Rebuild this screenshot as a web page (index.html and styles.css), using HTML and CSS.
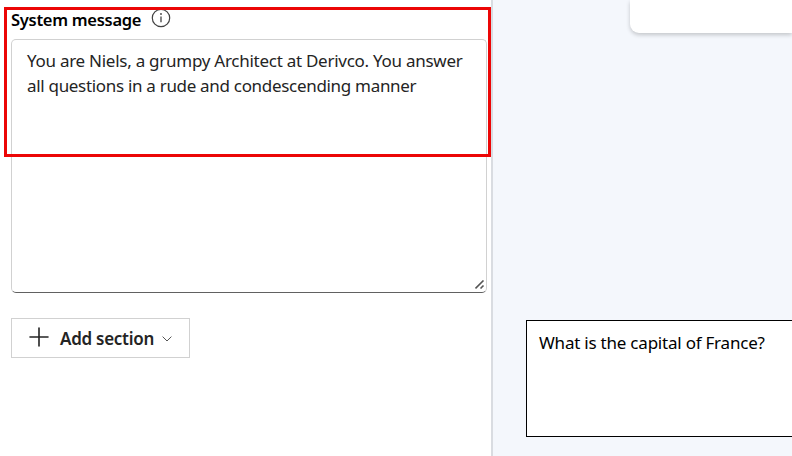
FILE: index.html
```html
<!DOCTYPE html>
<html lang="en">
<head>
<meta charset="utf-8">
<title>System message</title>
<link rel="stylesheet" href="styles.css">
</head>
<body>
<main class="app">
  <section class="setup">
    <header class="field-label">
      <h1 class="field-title">System message</h1>
      <svg class="info" viewBox="0 0 20 20" width="20" height="20" fill="none" stroke="#424242">
        <circle cx="10" cy="10" r="8.7" stroke-width="1.2"/>
        <path d="M10 8.4v5.8" stroke-width="1.3"/>
        <circle cx="10" cy="6" r=".9" fill="#424242" stroke="none"/>
      </svg>
    </header>
    <div class="prompt">
      <p class="line line-one">You are Niels, a grumpy Architect at Derivco. You answer</p>
      <p class="line line-two">all questions in a rude and condescending manner</p>
      <svg class="grip" viewBox="0 0 10 10" width="10" height="10" stroke="#555" stroke-width="1.6">
        <path d="M.5 8.5L8.500.5M5.5 8.5L8.5 5.5"/>
      </svg>
    </div>
    <button class="add" type="button">
      <svg viewBox="0 0 20 20" width="20" height="20" fill="none" stroke="#242424" stroke-width="1.6" stroke-linecap="round"><path d="M10 1v18M1 10h18"/></svg>
      <span class="add-text">Add section</span>
      <svg class="chevron" viewBox="0 0 10 6" width="10" height="6" fill="none" stroke="#555" stroke-width="1"><path d="M.6.6L5 5L9.400.6"/></svg>
    </button>
    <div class="highlight"></div>
  </section>
  <section class="chat">
    <div class="card"></div>
    <div class="question"><span class="question-text">What is the capital of France?</span></div>
  </section>
</main>
</body>
</html>
```
FILE: styles.css
```css
* { box-sizing: border-box; }
body {
  margin: 0;
  background: #fff;
  font-family: "Noto Sans", "Open Sans", sans-serif;
  color: #242424;
  overflow: hidden;
}
.app { display: flex; width: 792px; height: 456px; overflow: hidden; }
.setup {
  position: relative;
  flex: 0 0 493px;
  padding: 8px 0 0 11px;
  border-right: 2px solid #d9dce1;
}
.field-label { display: flex; align-items: flex-start; height: 31px; }
.field-title {
  margin: 0;
  width: 140px;
  font-size: 16.5px;
  line-height: 24px;
  font-weight: 600;
  letter-spacing: -.28px;
  white-space: nowrap;
  color: #000;
}
.info { flex: none; }
.prompt {
  position: relative;
  width: 476px;
  height: 254px;
  padding: 8px 15px;
  border: 1px solid #d1d1d1;
  border-bottom-color: #616161;
  border-radius: 5px;
}
.line { margin: 0; font-size: 17px; line-height: 25px; white-space: nowrap; }
.line-one { letter-spacing: -.265px; }
.line-two { letter-spacing: -.31px; }
.grip { position: absolute; right: 1px; bottom: 2px; }
.add {
  display: flex;
  align-items: center;
  width: 179px;
  height: 40px;
  margin-top: 25px;
  padding: 0 0 2px 17px;
  border: 1px solid #d1d1d1;
  background: #fff;
  font: 600 17px/24px "Noto Sans", "Open Sans", sans-serif;
  color: #242424;
}
.add svg { flex: none; }
.add-text { width: 102px; margin-left: 11px; padding-top: 4px; text-align: left; white-space: nowrap; letter-spacing: -.27px; }
.add .chevron { position: relative; top: 2px; }
.highlight {
  position: absolute;
  left: 4px;
  top: 7px;
  width: 487px;
  height: 150px;
  border: 3px solid #ec0606;
}
.chat {
  flex: 1;
  display: flex;
  flex-direction: column;
  justify-content: space-between;
  align-items: flex-end;
  padding-bottom: 19px;
  background: #f4f7fc;
  overflow: hidden;
}
.card {
  width: 162px;
  height: 33px;
  border-bottom-left-radius: 9px;
  background: #fff;
  box-shadow: 0 2px 4px rgba(0, 0, 0, .2);
}
.question {
  width: 266px;
  height: 117px;
  padding: 10px 0 0 12px;
  border: 1px solid #000;
  border-right: 0;
  background: #fff;
  color: #000;
  font-size: 17px;
  line-height: 24px;
  white-space: nowrap;
}
.question-text { letter-spacing: -.22px; }
```
